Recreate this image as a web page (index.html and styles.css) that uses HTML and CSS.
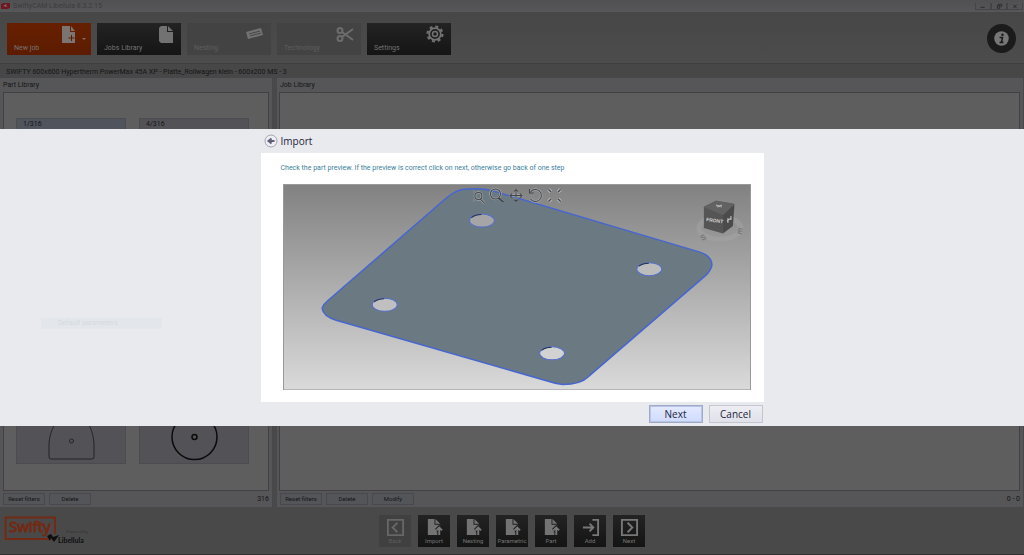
FILE: index.html
```html
<!DOCTYPE html>
<html lang="en">
<head>
<meta charset="utf-8">
<title>SwiftyCAM Libellula</title>
<link rel="stylesheet" href="styles.css">
</head>
<body>
<svg class="defs" aria-hidden="true">
  <symbol id="file-up" viewBox="0 0 20 20"><path d="M3 1h7v6h6v4l-4 4h3v3H3z"/><path d="M11 1l5 5h-5z"/><path class="halo" d="M15 18v-7M12 13l3-3 3 3"/><path class="line" d="M15 18v-7M12 13l3-3 3 3"/></symbol>
</svg>
<div class="app">
  <header class="titlebar">
    <svg class="app-icon" viewBox="0 0 9 6"><path fill="#6d1722" d="M0 1l3-1h6v5l-3 1H0z"/><path fill="#8b7478" d="M2 3l4-2-1 2 2 1z"/></svg>
    <span class="app-name">SwiftyCAM Libellula 8.3.2.15</span>
    <div class="win-buttons">
      <button aria-label="Minimize"><svg viewBox="0 0 16 7"><path d="M5 5h5"/></svg></button>
      <button aria-label="Restore"><svg viewBox="0 0 16 7"><path d="M6 3h3v3H6zM7 1.500h4v3"/></svg></button>
      <button aria-label="Close"><svg viewBox="0 0 16 7"><path d="M6 2l4 4M10 2L6 6"/></svg></button>
    </div>
  </header>
  <nav class="toolbar">
    <button class="tile active">
      <svg class="tile-icon new" viewBox="0 0 16 19"><path fill="#7c7471" d="M1 1h8v6h5v11H1z"/><path fill="#7c7471" d="M10 1l4 5h-4z"/><path stroke="#5a1c00" d="M10.500 10v6M7.500 13h6"/></svg>
      <span class="caret"></span><span>New job</span></button>
    <button class="tile">
      <svg class="tile-icon" viewBox="0 0 16 19"><path fill="#727272" d="M1 3l2-2h6v6h6v11H3l-2-2z"/><path fill="#727272" d="M10 1l5 5h-5z"/></svg>
      <span>Jobs Library</span></button>
    <button class="tile" disabled>
      <svg class="tile-icon wide" viewBox="0 0 18 19"><path fill="#727272" d="M0 7l15-4 2 7-15 4z"/><path stroke="#484848" fill="none" d="M3 9l11-3M4 11l11-3"/></svg>
      <span>Nesting</span></button>
    <button class="tile" disabled>
      <svg class="tile-icon wide" viewBox="0 0 18 19"><g fill="none" stroke="#6c6c6c" stroke-width="2"><circle cx="4" cy="5.500" r="2.500"/><circle cx="4" cy="13.500" r="2.500"/><path d="M6 7l11 8M6 12l11-8"/></g></svg>
      <span>Technology</span></button>
    <button class="tile">
      <svg class="tile-icon wide" viewBox="0 0 18 19"><g fill="none" stroke="#727272"><circle cx="9" cy="9" r="7.500" stroke-width="2.200" stroke-dasharray="3 2.900"/><circle cx="9" cy="9" r="5.800" stroke-width="1.800"/><circle cx="9" cy="9" r="2.500" stroke-width="1.500"/></g></svg>
      <span>Settings</span></button>
    <button class="info" aria-label="Information"><svg viewBox="0 0 30 30"><circle cx="15" cy="15" r="7.500" fill="#777"/><circle cx="16" cy="11" r="1.300" fill="#1b1b1b"/><path d="M13 14h3l-1 5h2M13 19h2" fill="none" stroke="#1b1b1b" stroke-width="1.600"/></svg></button>
  </nav>
  <div class="machine">SWIFTY 600x600 Hypertherm PowerMax 45A XP - Platte_Rollwagen klein - 600x200 MS - 3</div>
  <main class="panels">
    <section class="panel parts">
      <h2>Part Library</h2>
      <div class="list cards">
        <article class="card selected">1/316</article><article class="card">4/316</article>
        <article class="card"></article><article class="card"></article>
        <article class="card"><svg viewBox="0 0 110 110"><path d="M33 103V90C34 75 41 61 56 61S77 75 78 90v13q0 2-2 2H35q-2 0-2-2z"/><circle cx="55.500" cy="87" r="2"/></svg></article>
        <article class="card strong"><svg viewBox="0 0 110 110"><circle cx="55.500" cy="83" r="22.500"/><circle cx="55.500" cy="83" r="2.500"/></svg></article>
      </div>
      <div class="actions"><button>Reset filters</button><button>Delete</button><span class="count">316</span></div>
    </section>
    <section class="panel jobs">
      <h2>Job Library</h2>
      <div class="list"></div>
      <div class="actions"><button>Reset filters</button><button>Delete</button><button>Modify</button><span class="count">0 - 0</span></div>
    </section>
  </main>
  <footer class="footer">
    <svg class="logo" viewBox="0 0 90 34"><path d="M45 25H1.500V3.500H51V20" fill="none" stroke="#722a14" stroke-width="2"/><text x="5" y="18" class="logo-main">Swifty</text><path d="M43 22l4-2 2 3 6-2-5 7-3-4-1 3z" fill="#0e0e0e"/><text x="62" y="19" class="logo-by">Powered by</text><text x="54" y="29" class="logo-sub">Libellula</text></svg>
    <div class="steps">
      <button class="step" disabled><svg viewBox="0 0 20 20"><path class="line" d="M2 2h16v16H2zM12 5l-5 5 5 5"/></svg><span>Back</span></button>
      <button class="step"><svg><use href="#file-up"/></svg><span>Import</span></button>
      <button class="step"><svg><use href="#file-up"/></svg><span>Nesting</span></button>
      <button class="step"><svg><use href="#file-up"/></svg><span>Parametric</span></button>
      <button class="step"><svg><use href="#file-up"/></svg><span>Part</span></button>
      <button class="step"><svg viewBox="0 0 20 20"><path class="line" d="M2 10h11M9 6l4 4-4 4M12 2h6v16h-6"/></svg><span>Add</span></button>
      <button class="step"><svg viewBox="0 0 20 20"><path class="line" d="M2 2h16v16H2zM8 5l5 5-5 5"/></svg><span>Next</span></button>
    </div>
  </footer>
</div>

<div class="modal">
  <div class="band" role="dialog" aria-labelledby="dialog-title">
    <div class="ghost">Default parameters</div>
    <div class="wizard">
      <div class="wizard-head">
        <button class="back" aria-label="Back"><svg viewBox="0 0 14 14"><circle cx="7" cy="7" r="6" fill="#eeeef5" stroke="#a5a5b4"/><path d="M10.500 7H5M7.500 4.500L4.500 7l3 2.500" fill="none" stroke="#606074" stroke-width="2"/></svg></button>
        <h1 id="dialog-title">Import</h1>
      </div>
      <div class="wizard-body">
        <p>Check the part preview. If the preview is correct click on next, otherwise go back of one step</p>
        <svg class="viewer" viewBox="283 184 467 206" role="img" aria-label="Part preview">
          <defs><linearGradient id="bg" x1="0" y1="0" x2="0" y2="1"><stop offset="0" stop-color="#818181"/><stop offset="1" stop-color="#dadada"/></linearGradient></defs>
          <rect x="283" y="184" width="467" height="206" fill="url(#bg)"/>
          <path d="M327 301L446 198Q457 188 470 189Q482 188 493 191L699 252Q711 256 711 265Q710 271 704 276L588 376Q580 384 562 384Q554 383 545 380L336 320Q323 316 322 308Q323 304 327 301Z" fill="#6b7983" stroke="#4766cf" stroke-width="1.500"/>
          <g fill="#bcbcbc" stroke="#5670ca"><ellipse cx="481.500" cy="220.500" rx="12.500" ry="6.500" fill="#a5a5a5"/><ellipse cx="648.500" cy="269" rx="12.500" ry="6.500"/><ellipse cx="384.500" cy="304.500" rx="12.500" ry="6.500" fill="#c0c0c0"/><ellipse cx="551.500" cy="353" rx="12.500" ry="6.500" fill="#d2d2d2"/></g>
          <g fill="none" stroke="#24304e"><path d="M471 217.500q4-3 10-3M638 266q4-3 10-3M374 301.500q4-3 10-3M541 350q4-3 10-3"/></g>
          <g fill="none">
            <g stroke="#a0a4a6" stroke-width="2.500"><circle cx="478" cy="196" r="3.500"/><path d="M480 199l4 4"/><circle cx="495" cy="194" r="5"/><path d="M498 198l5 4M509 195.500h13M515.500 189v13M530 192a6 6 0 1 1 0 7"/></g>
            <g stroke="#42474c"><path d="M473 193v-2h2M473 199v2h2" stroke="#85898c"/><circle cx="478" cy="196" r="3.500"/><path d="M480 199l4 4"/><circle cx="495" cy="194" r="5"/><path d="M498 198l5 4" stroke-width="2"/><path d="M509.500 195.500h12M515.500 189.500v12M511.500 193.500l-2 2 2 2M519.500 193.500l2 2-2 2M513.500 191.500l2-2 2 2M513.500 199.500l2 2 2-2M530 192a6 6 0 1 1 0 7M529 189v4h4"/></g>
            <path d="M548 189.500l2.500 2.500M560 189.500l-2.500 2.500M548 201.500l2.500-2.500M560 201.500l-2.500-2.500" stroke="#b5b8ba" stroke-width="3.500"/>
            <path d="M548 189.500l2.500 2.500M560 189.500l-2.500 2.500M548 201.500l2.500-2.500M560 201.500l-2.500-2.500" stroke="#474c50" stroke-width="1.500"/>
          </g>
          <ellipse cx="719" cy="228" rx="21" ry="11" fill="none" stroke="#a6a6a6" stroke-width="5" opacity=".45"/>
          <path d="M703 207L722 215V233.500L703 228Z" fill="#555"/><path d="M722 215L733.500 204L732 226L722 233.500Z" fill="#4b4b4b"/>
          <path d="M703 207L715 201L733 204L722 215Z" fill="#626262" stroke="#555" stroke-width=".6"/>
          <path d="M715 205l6 2M716 207l5-2" stroke="#b8b8b8"/>
          <text x="705" y="221" class="cube-text" transform="rotate(8 705 221)">FRONT</text><path d="M726 221l4-3M727 218v5M730 216v4" stroke="#c8c8c8" fill="none"/>
          <text x="701" y="241" class="compass" transform="rotate(-25 701 241)">S</text><text x="736" y="233" class="compass" transform="rotate(15 736 233)">E</text>
          <rect x="283.500" y="184.500" width="466" height="205" fill="none" stroke="#999"/>
        </svg>
      </div>
      <div class="wizard-foot"><button class="primary">Next</button><button>Cancel</button></div>
    </div>
  </div>
</div>
</body>
</html>
```
FILE: styles.css
```css
* { box-sizing: border-box; }
body { margin: 0; background: #494949; font: 7px/10px Roboto, "Noto Sans", sans-serif; color: #151517; }
button { font: inherit; color: inherit; margin: 0; padding: 0; border: 0; background: none; white-space: nowrap; }
h1, h2, p { margin: 0; font-weight: 400; }
svg { display: block; }
.defs { position: absolute; width: 0; height: 0; }

.app { min-height: 100vh; display: flex; flex-direction: column; border-bottom: 1px solid #333; }
.titlebar { height: 12px; display: flex; align-items: center; background: linear-gradient(#505052, #57575a); color: #3b3b3d; }
.app-icon { width: 9px; height: 6px; margin: 0 3px 0 1px; }
.app-name { flex: 1; }
.win-buttons { display: flex; padding-right: 1px; }
.win-buttons button { width: 16px; height: 7px; border: 1px solid #434349; border-top: 0; }
.win-buttons svg { width: 14px; height: 6px; fill: none; stroke: #252528; }

.toolbar { height: 52px; padding: 2px 8px 0 7px; display: flex; align-items: center; gap: 6px; background: linear-gradient(#474747, #4c4c4c); border-bottom: 1px solid #3f3f3f; }
.tile { position: relative; width: 84px; height: 32px; padding: 0 7px 2px; display: flex; align-items: flex-end; background: linear-gradient(#232323, #151515); color: #747474; }
.tile.active { background: linear-gradient(#662000, #5d1c00); }
.tile:disabled { background: #434343; color: #5e5e5e; }
.tile-icon { position: absolute; top: 2px; right: 7px; width: 16px; height: 19px; }
.tile-icon.wide { width: 18px; }
.tile-icon.new { right: 14px; }
.caret { position: absolute; right: 5px; top: 15px; border: 2px solid transparent; border-top-color: #8c6b5c; }
.info { width: 29px; height: 29px; margin-left: auto; border-radius: 50%; background: #1b1b1b; }

.machine { height: 14px; padding: 3px 6px 1px; background: #474747; }
.panels { flex: 1; display: grid; grid-template-columns: 273fr 747fr; gap: 4px; }
.panel { display: flex; flex-direction: column; background: #565658; border-right: 1px solid #48484c; }
.panel h2 { height: 14px; padding: 2px 3px; font-size: 7px; line-height: 10px; }
.list { flex: 1; margin: 0 3px; border: 1px solid #414145; background: #5e5e5e; }
.jobs .list { margin-left: 2px; }
.cards { display: grid; grid-template-columns: 110px 110px; grid-auto-rows: 110px; gap: 8px 13px; padding: 25px 12px; }
.card { border: 1px solid #4b4b50; background: #535357; padding: 0 6px; }
.card.selected { background: #50545d; }
.card svg { width: 110px; height: 110px; margin: -1px -7px; fill: none; stroke: #242426; stroke-width: 1; }
.card.strong svg { stroke: #0b0b0b; stroke-width: 1.5px; }
.actions { height: 16px; display: flex; align-items: center; gap: 4px; padding: 0 3px; }
.actions button { width: 42px; height: 12px; border: 1px solid #48494e; background: #535558; font-size: 6px; }
.count { margin-left: auto; }

.footer { height: 47px; display: grid; grid-template-columns: 1fr auto 1fr; align-items: center; padding: 0 4px; }
.logo { width: 90px; height: 34px; }
.logo-main { font: 15px "Open Sans", sans-serif; fill: #722a14; stroke: #722a14; stroke-width: 1px; }
.logo-by { font: 4px "Open Sans", sans-serif; fill: #303030; }
.logo-sub { font: bold 7px Lato, sans-serif; fill: #0e0e0e; }
.steps { display: flex; gap: 7px; }
.step { width: 32px; height: 32px; padding-top: 3px; display: flex; flex-direction: column; align-items: center; background: linear-gradient(#232323, #141414); color: #747474; font-size: 6px; line-height: 8px; }
.step svg { width: 19px; height: 19px; fill: #737373; }
.step .line { fill: none; }
.line { fill: none; stroke: #777; stroke-width: 2; }
.halo { fill: none; stroke: #1d1d1d; stroke-width: 4; }
.step:disabled { background: #404040; color: #5c5c5c; }
.step:disabled .line { stroke: #666; }

.modal { position: absolute; inset: 0; display: flex; align-items: center; }
.band { position: relative; flex: 1; background: #e9eaee; display: flex; justify-content: center; }
.ghost { position: absolute; left: 41px; top: 189px; width: 121px; height: 11px; padding-left: 17px; background: #e3e7eb; color: #d3dade; }
.wizard { width: 503px; color: #24243c; }
.wizard-head { height: 24px; display: flex; align-items: center; gap: 3px; padding-left: 3px; }
.back, .back svg { width: 14px; height: 14px; }
h1 { font: 10px/14px "Open Sans", sans-serif; }
.wizard-body { background: #fff; padding: 10px 13px 12px 22px; }
.wizard-body p { line-height: 11px; height: 21px; color: #3b7f9c; margin-left: -2px; }
.viewer { width: 100%; }
.cube-text { font: bold 5px "Liberation Sans", sans-serif; fill: #d0d0d0; }
.compass { font: bold 8px "Liberation Sans", sans-serif; fill: #777; }
.wizard-foot { height: 24px; display: flex; justify-content: flex-end; align-items: center; gap: 6px; padding-right: 1px; font: 10px "Open Sans", sans-serif; }
.wizard-foot button { width: 54px; height: 18px; border: 1px solid #c3c5d0; background: linear-gradient(#ededf3, #e0e1e9); }
.wizard-foot .primary { border-color: #9fa9c8; box-shadow: inset 0 0 0 1px #b9c4e6; background: linear-gradient(#e3e9fd, #cfdbff); }
```
